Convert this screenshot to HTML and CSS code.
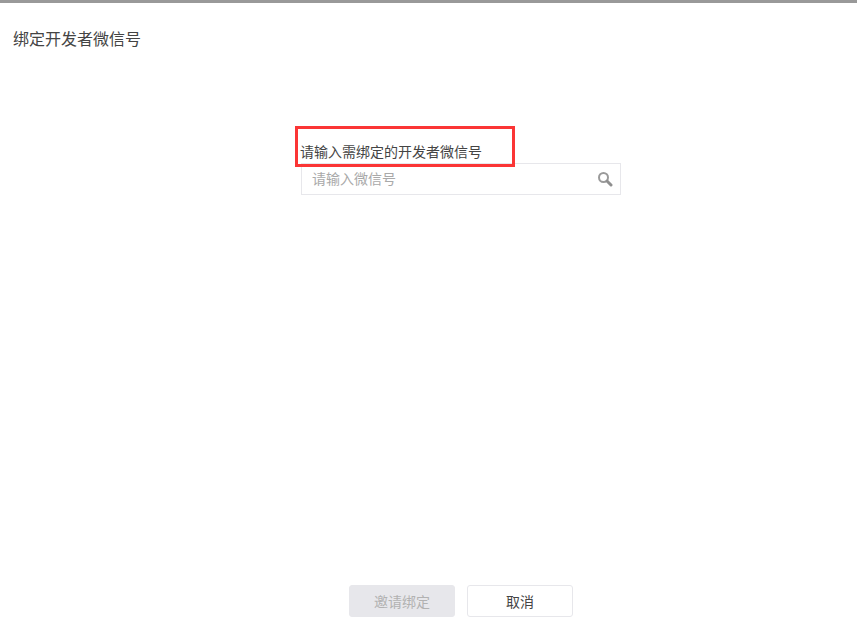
FILE: index.html
```html
<!DOCTYPE html>
<html lang="zh-CN">
<head>
<meta charset="utf-8">
<title>绑定开发者微信号</title>
<link rel="stylesheet" href="styles.css">
</head>
<body>
<div class="page">
  <h1 class="title">绑定开发者微信号</h1>
  <main class="content">
    <div class="form">
      <label class="label" for="wx">请输入需绑定的开发者微信号</label>
      <div class="search">
        <input class="input" id="wx" type="text" placeholder="请输入微信号">
        <svg class="icon" width="16" height="16" viewBox="0 0 16 16" aria-hidden="true">
          <circle cx="6.5" cy="6.5" r="4.5" fill="none" stroke="#9a9a9a" stroke-width="2"/>
          <path d="M10 10l4 4" stroke="#8f8f8f" stroke-width="3" stroke-linecap="round"/>
        </svg>
      </div>
      <div class="highlight"></div>
    </div>
  </main>
  <footer class="actions">
    <button class="btn btn-disabled" type="button" disabled>邀请绑定</button>
    <button class="btn" type="button">取消</button>
  </footer>
</div>
</body>
</html>
```

FILE: styles.css
```css
* { box-sizing: border-box; }
html, body { margin: 0; padding: 0; height: 100%; background: #fff; }
body { overflow: hidden; font-family: "Noto Sans CJK SC", "Liberation Sans", sans-serif; color: #444; }
.page {
  height: 633px;
  border-top: 3px solid #999;
  display: flex;
  flex-direction: column;
}
.title {
  margin: 0;
  padding: 23px 13px 2px;
  font-size: 16px;
  font-weight: 400;
  line-height: 24px;
}
.content { flex: 1; padding: 0 0 0 301px; }
.form { position: relative; width: 320px; padding-top: 87px; }
.label { display: block; margin-left: -1px; font-size: 14px; line-height: 24px; height: 24px; }
.search { position: relative; height: 32px; }
.input {
  display: block;
  width: 100%;
  height: 32px;
  border: 1px solid #e7e7eb;
  padding: 0 40px 2px 10px;
  font: inherit;
  font-size: 14px;
  color: #444;
  outline: none;
  background: #fff;
}
.input::placeholder { color: #a9a9a9; opacity: 1; }
.icon { position: absolute; right: 8px; top: 8px; }
.highlight {
  position: absolute;
  left: -6px;
  top: 74px;
  width: 220px;
  height: 41px;
  border: 3px solid #fb3535;
  pointer-events: none;
}
.actions {
  display: flex;
  justify-content: center;
  gap: 12px;
  padding: 0 0 16px 64px;
}
.btn {
  width: 106px;
  height: 32px;
  border: 1px solid #e7e7eb;
  border-radius: 3px;
  background: #fff;
  color: #444;
  font: inherit;
  font-size: 14px;
  padding: 0 0 0 1px;
}
.btn-disabled { background: #e7e7eb; color: #b2b2b2; }
```
